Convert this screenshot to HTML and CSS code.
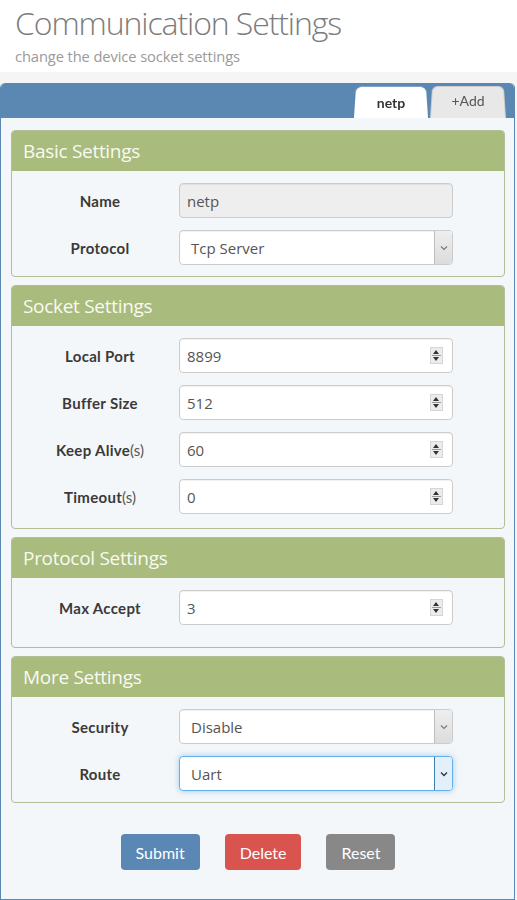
FILE: index.html
```html
<!DOCTYPE html>
<html lang="en">
<head>
    <meta charset="UTF-8">
    <meta name="viewport" content="width=device-width, initial-scale=1.0">
    <title>Communication Settings</title>
    <link rel="stylesheet" href="styles.css">
</head>
<body>
    <!-- Page heading -->
    <div class="page-head">
        <h1>Communication Settings</h1>
        <p class="sub">change the device socket settings</p>
    </div>

    <div class="main">
        <div class="card">
            <!-- Socket tabs -->
            <div class="tabbar">
                <div class="tab active">netp</div>
                <div class="tab">+Add</div>
            </div>

            <div class="card-body">
                <!-- Basic -->
                <div class="panel">
                    <div class="panel-head">Basic Settings</div>
                    <div class="panel-body">
                        <div class="row">
                            <label class="lbl">Name</label>
                            <div class="field disabled"><input type="text" value="netp" disabled></div>
                        </div>
                        <div class="row">
                            <label class="lbl">Protocol</label>
                            <div class="field select">
                                <span class="val">Tcp Server</span>
                                <span class="caret"><svg width="8" height="6" viewBox="0 0 8 6"><path d="M1 1.5 L4 4.5 L7 1.5" fill="none" stroke="#777" stroke-width="1.1"/></svg></span>
                            </div>
                        </div>
                    </div>
                </div>

                <!-- Socket -->
                <div class="panel">
                    <div class="panel-head">Socket Settings</div>
                    <div class="panel-body mid">
                        <div class="row">
                            <label class="lbl">Local Port</label>
                            <div class="field num"><input type="text" value="8899"><span class="spin"></span></div>
                        </div>
                        <div class="row">
                            <label class="lbl">Buffer Size</label>
                            <div class="field num"><input type="text" value="512"><span class="spin"></span></div>
                        </div>
                        <div class="row">
                            <label class="lbl">Keep Alive<span class="unit">(s)</span></label>
                            <div class="field num"><input type="text" value="60"><span class="spin"></span></div>
                        </div>
                        <div class="row">
                            <label class="lbl">Timeout<span class="unit">(s)</span></label>
                            <div class="field num"><input type="text" value="0"><span class="spin"></span></div>
                        </div>
                    </div>
                </div>

                <!-- Protocol -->
                <div class="panel">
                    <div class="panel-head">Protocol Settings</div>
                    <div class="panel-body tall">
                        <div class="row">
                            <label class="lbl">Max Accept</label>
                            <div class="field num"><input type="text" value="3"><span class="spin"></span></div>
                        </div>
                    </div>
                </div>

                <!-- More -->
                <div class="panel">
                    <div class="panel-head">More Settings</div>
                    <div class="panel-body short">
                        <div class="row">
                            <label class="lbl">Security</label>
                            <div class="field select">
                                <span class="val">Disable</span>
                                <span class="caret"><svg width="8" height="6" viewBox="0 0 8 6"><path d="M1 1.5 L4 4.5 L7 1.5" fill="none" stroke="#777" stroke-width="1.1"/></svg></span>
                            </div>
                        </div>
                        <div class="row">
                            <label class="lbl">Route</label>
                            <div class="field select focus">
                                <span class="val">Uart</span>
                                <span class="caret"><svg width="8" height="6" viewBox="0 0 8 6"><path d="M1 1.5 L4 4.5 L7 1.5" fill="none" stroke="#333" stroke-width="1.3"/></svg></span>
                            </div>
                        </div>
                    </div>
                </div>

                <!-- Actions -->
                <div class="actions">
                    <button class="btn btn-blue">Submit</button>
                    <button class="btn btn-red">Delete</button>
                    <button class="btn btn-gray">Reset</button>
                </div>
            </div>
        </div>
    </div>
</body>
</html>
```

FILE: styles.css
```css
/* Reset */
* {
    box-sizing: border-box;
}

body {
    margin: 0;
    background: #fff;
    font-family: 'Lato', sans-serif;
    color: #333;
}

/* Heading */
.page-head {
    height: 72px;
    padding: 3px 15px 0;
}

.page-head h1 {
    margin: 0;
    font-family: 'Open Sans', sans-serif;
    font-weight: 300;
    font-size: 32px;
    line-height: 40px;
    color: #7c7c7c;
    letter-spacing: -1.1px;
}

.sub {
    margin: 3px 0 0;
    font-family: 'Open Sans', sans-serif;
    font-size: 14.7px;
    color: #9a9a9a;
    letter-spacing: -0.1px;
}

.main {
    background: #f5f5f5;
    padding-top: 11px;
}

/* Card with the tab strip */
.card {
    margin-right: 2px;
    border: 1px solid #5b87b3;
    border-top: none;
    border-radius: 5px 5px 0 0;
    background: #f4f7f9;
    min-height: 817px;
}

.tabbar {
    height: 35px;
    background: #5b87b3;
    border-radius: 5px 5px 0 0;
    display: flex;
    justify-content: flex-end;
    align-items: flex-end;
    padding-right: 8px;
}

.tab {
    position: relative;
    z-index: 0;
    width: 76px;
    height: 34px;
    line-height: 34px;
    text-align: center;
    font-size: 14px;
    color: #555;
}

.tab::before {
    content: '';
    position: absolute;
    inset: 0;
    z-index: -1;
    background: #e8e8e8;
    border: 1px solid #ccc;
    border-bottom: none;
    border-radius: 6px 6px 0 0;
    transform: perspective(40px) rotateX(4deg);
    transform-origin: bottom;
}

.tab.active {
    width: 74px;
    height: 33px;
    line-height: 35px;
    font-weight: 700;
    color: #333;
    margin-right: 2px;
    z-index: 1;
}

.tab.active::before {
    background: #fff;
    border-color: #fff;
}

.card-body {
    padding: 12px 9px 0 10px;
}

/* Setting panels */
.panel {
    border: 1px solid #b3be98;
    border-radius: 4px;
    background: #f4f7f9;
    margin-bottom: 8px;
    overflow: hidden;
}

.panel-head {
    height: 40px;
    line-height: 40px;
    padding: 0 11px;
    background: #a9bb7d;
    font-family: 'Open Sans', sans-serif;
    font-size: 19px;
    color: #f8faf2;
    letter-spacing: -0.3px;
}

.panel-body {
    padding-bottom: 11px;
}

.panel-body.mid {
    padding-bottom: 14px;
}

.panel-body.tall {
    padding-bottom: 22px;
}

.panel-body.short {
    padding-bottom: 11px;
}

.row {
    display: flex;
    align-items: center;
    height: 35px;
    margin-top: 12px;
}

.lbl {
    width: 167px;
    padding-left: 9px;
    text-align: center;
    font-weight: 700;
    font-size: 15px;
    letter-spacing: 0.3px;
    color: #3a3a3a;
}

.unit {
    font-weight: 400;
    color: #555;
    letter-spacing: 0;
}

/* Inputs */
.field {
    width: 274px;
    height: 35px;
    display: flex;
    align-items: center;
    background: #fff;
    border: 1px solid #ccc;
    border-radius: 4px;
    box-shadow: inset 0 1px 1px rgba(0, 0, 0, 0.06);
    font-family: 'Open Sans', sans-serif;
    font-size: 15px;
    color: #555;
}

.field input {
    flex: 1;
    min-width: 0;
    height: 100%;
    border: none;
    background: transparent;
    padding: 0 0 0 7px;
    font: inherit;
    color: inherit;
    outline: none;
}

.field.disabled {
    background: #eee;
}

.spin {
    width: 13px;
    height: 17px;
    margin-right: 9px;
    border: 1px solid #d6d6d6;
    background:
        linear-gradient(#999, #999) center / 9px 1px no-repeat,
        #ececec;
    position: relative;
}

.spin::before,
.spin::after {
    content: '';
    position: absolute;
    left: 2px;
    border-left: 3.5px solid transparent;
    border-right: 3.5px solid transparent;
}

.spin::before {
    top: 2px;
    border-bottom: 4px solid #333;
}

.spin::after {
    bottom: 2px;
    border-top: 4px solid #333;
}

.select .val {
    flex: 1;
    padding-left: 11px;
}

.caret {
    width: 18px;
    height: 100%;
    display: flex;
    align-items: center;
    justify-content: center;
    background: linear-gradient(#eee, #dcdcdc);
    border-left: 1px solid #bdbdbd;
    border-radius: 0 3px 3px 0;
}

.field.focus {
    border-color: #66afe9;
    box-shadow: 0 0 6px rgba(102, 175, 233, 0.6);
}

.field.focus .caret {
    background: #e3f0fb;
    border-left-color: #3c7fb1;
}

/* Buttons */
.actions {
    display: flex;
    justify-content: center;
    gap: 25px;
    padding-top: 23px;
}

.btn {
    height: 36px;
    padding: 0 15px;
    border: none;
    border-radius: 4px;
    font-family: 'Lato', sans-serif;
    font-size: 16px;
    color: #fff;
    cursor: pointer;
}

.btn-blue {
    background: #5b87b5;
}

.btn-red {
    background: #d9534f;
}

.btn-gray {
    background: #888;
}
```
